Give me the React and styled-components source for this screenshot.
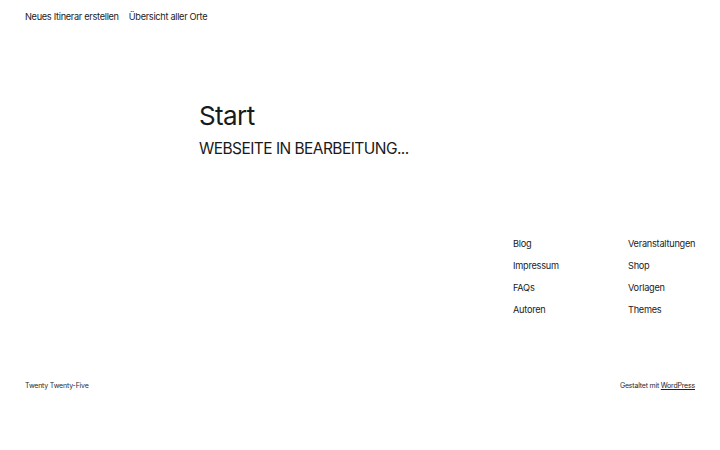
import React from "react";
import styled, { createGlobalStyle } from "styled-components";

const GlobalStyle = createGlobalStyle`
  html, body {
    margin: 0;
    padding: 0;
    background: #fff;
  }
  body {
    font-family: Inter, "Noto Sans", sans-serif;
    color: #1e1e1e;
    -webkit-font-smoothing: antialiased;
  }
`;

const Page = styled.div`
  width: 720px;
  height: 450px;
  display: flex;
  flex-direction: column;
  box-sizing: border-box;
  padding: 0 25px;
`;

const Header = styled.header`
  display: flex;
  gap: 10px;
  padding-top: 5px;
  height: 22px;
  align-items: center;
`;

const NavLink = styled.a`
  font-size: 9.2px;
  letter-spacing: -0.3px;
  color: #222;
  text-decoration: none;
`;

const Main = styled.main`
  padding-left: 174px;
  padding-top: 73px;
`;

const Title = styled.h1`
  margin: 0;
  font-weight: 400;
  font-size: 26px;
  letter-spacing: -0.6px;
  line-height: 32px;
  color: #1a1a1a;
`;

const Subtitle = styled.p`
  margin: 0;
  margin-top: 5px;
  font-size: 15.5px;
  letter-spacing: -0.55px;
  line-height: 24px;
  color: #1a1a1a;
`;

const Footer = styled.footer`
  margin-top: 72px;
  display: flex;
  flex-direction: column;
`;

const LinkGrid = styled.nav`
  display: grid;
  grid-template-columns: 115px auto;
  margin-left: 488px;
  width: 182px;
`;

const FooterLink = styled.a`
  font-size: 9.2px;
  letter-spacing: -0.25px;
  line-height: 22px;
  color: #222;
  text-decoration: none;
  white-space: nowrap;
`;

const Bottom = styled.div`
  margin-top: 60px;
  display: flex;
  justify-content: space-between;
  font-size: 7px;
  letter-spacing: -0.2px;
  color: #2a2a2a;
`;

const Credit = styled.span`
  a {
    color: #222;
    text-decoration: underline;
  }
`;

const left = ["Blog", "Impressum", "FAQs", "Autoren"];
const right = ["Veranstaltungen", "Shop", "Vorlagen", "Themes"];

export default function App() {
  return (
    <>
      <GlobalStyle />
      <Page>
        <Header>
          <NavLink href="#">Neues Itinerar erstellen</NavLink>
          <NavLink href="#">Übersicht aller Orte</NavLink>
        </Header>
        <Main>
          <Title>Start</Title>
          <Subtitle>WEBSEITE IN BEARBEITUNG...</Subtitle>
        </Main>
        <Footer>
          <LinkGrid>
            {left.map((l, i) => (
              <React.Fragment key={l}>
                <FooterLink href="#">{l}</FooterLink>
                <FooterLink href="#">{right[i]}</FooterLink>
              </React.Fragment>
            ))}
          </LinkGrid>
          <Bottom>
            <span>Twenty Twenty-Five</span>
            <Credit>
              Gestaltet mit <a href="#">WordPress</a>
            </Credit>
          </Bottom>
        </Footer>
      </Page>
    </>
  );
}
